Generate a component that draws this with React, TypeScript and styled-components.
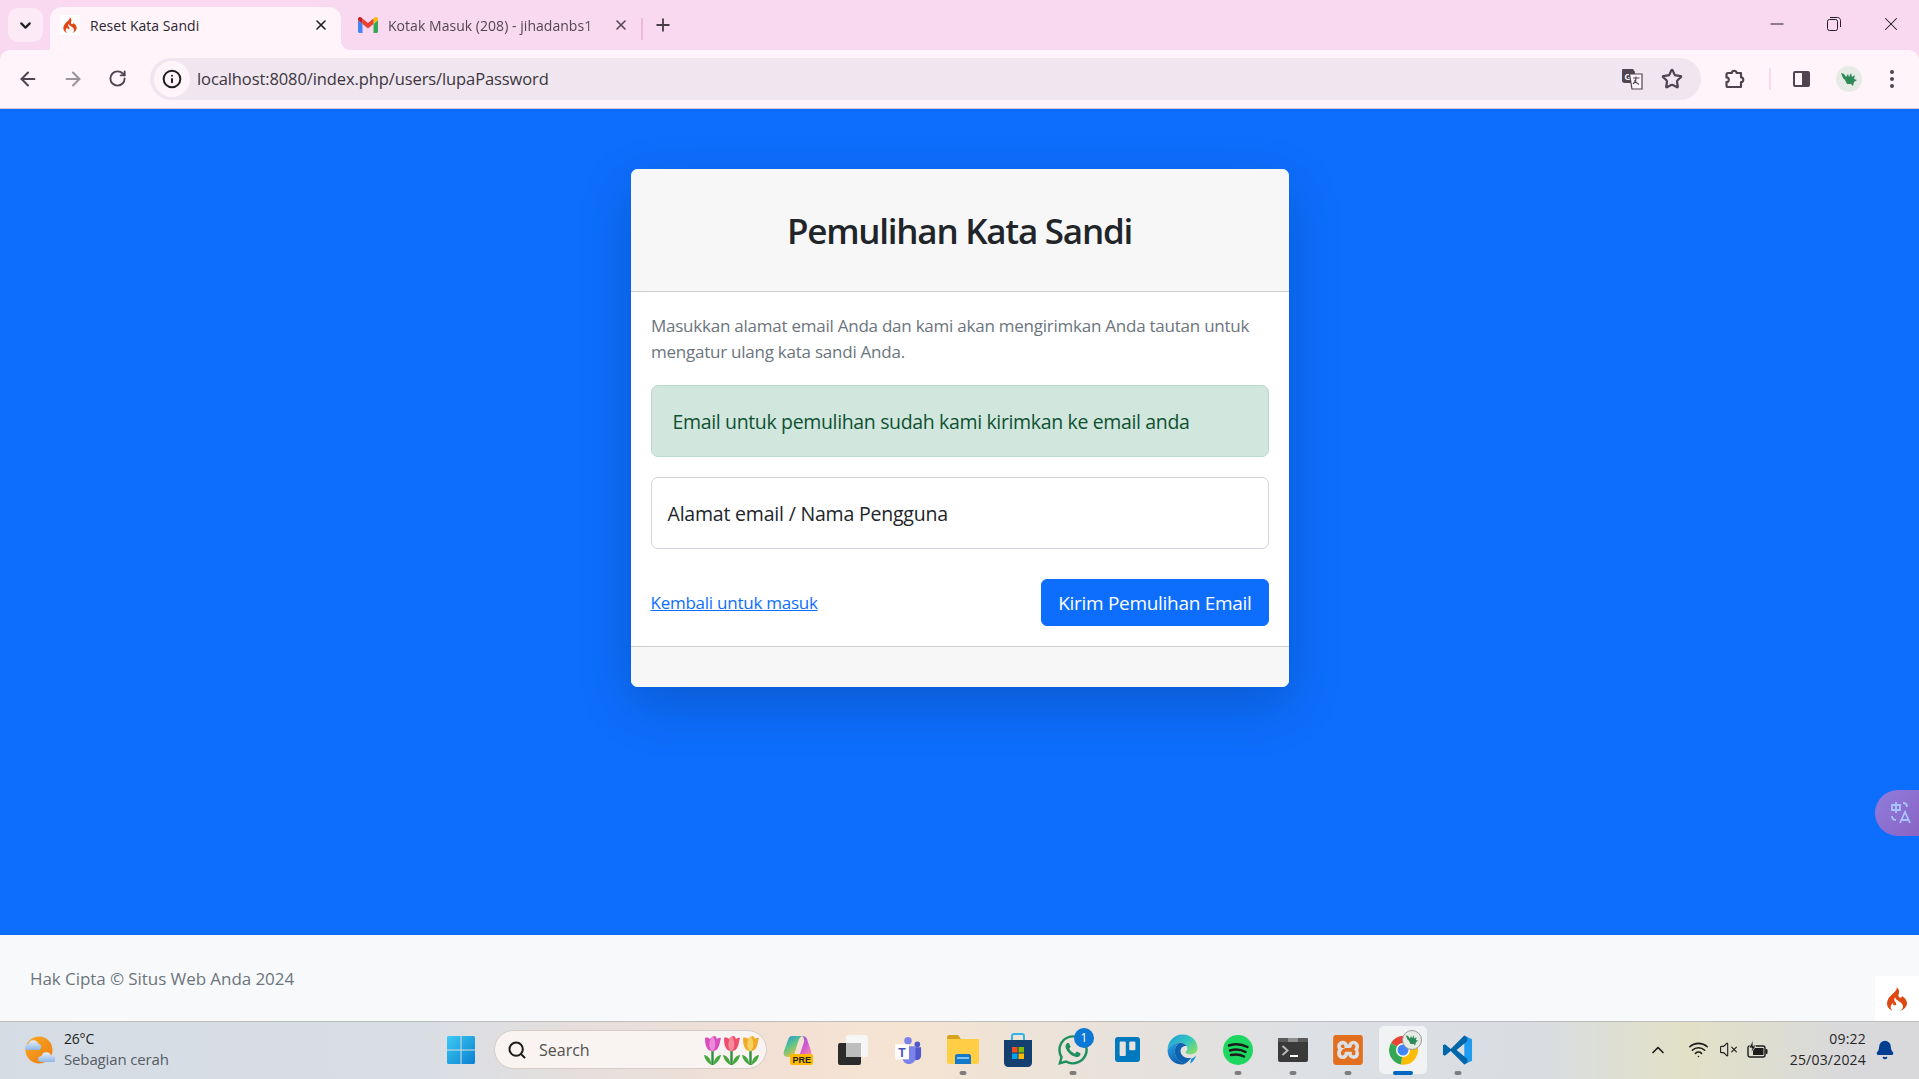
import React from "react";
import styled, { createGlobalStyle } from "styled-components";
import {
  ArrowLeft,
  ArrowRight,
  Bell,
  ChevronDown,
  ChevronUp,
  Info,
  Plus,
  RotateCw,
  Search,
  Star,
  VolumeX,
  Wifi,
  X,
} from "lucide-react";
import { FaWhatsapp } from "react-icons/fa";
import { SiCodeigniter, SiTrello, SiXampp } from "react-icons/si";

const UI_FONT = `"Open Sans", "Noto Sans", "Liberation Sans", sans-serif`;

const GlobalStyle = createGlobalStyle`
  html, body {
    margin: 0;
    padding: 0;
    height: 100%;
    overflow: hidden;
  }
  body {
    font-family: ${UI_FONT};
  }
  * {
    box-sizing: border-box;
  }
`;

const Page = styled.div`
  position: relative;
  display: flex;
  flex-direction: column;
  height: 1079px;
  overflow: hidden;
  background: #f8d9f0;
`;

/* tab strip */
const TabStrip = styled.div`
  display: flex;
  align-items: flex-end;
  height: 50px;
  flex: none;
  padding-left: 8px;
  color: #473f45;
`;

const TabSearch = styled.div`
  display: flex;
  align-items: center;
  justify-content: center;
  align-self: flex-start;
  width: 35px;
  height: 34px;
  margin-top: 8px;
  border-radius: 10px;
  background: #fdeaf7;
  color: #1f1f1f;
`;

const Tab = styled.div<{ $active?: boolean }>`
  position: relative;
  display: flex;
  align-items: center;
  width: ${(p) => (p.$active ? 291 : 300)}px;
  height: 43px;
  margin-left: ${(p) => (p.$active ? 7 : 0)}px;
  padding: 0 12px 7px ${(p) => (p.$active ? 10 : 17)}px;
  border-radius: 12px 12px 0 0;
  background: ${(p) => (p.$active ? "#fff4fa" : "transparent")};
  color: ${(p) => (p.$active ? "#2c2630" : "#524650")};
  &::after {
    content: ${(p) => (p.$active ? '""' : "none")};
    position: absolute;
    right: -10px;
    bottom: 0;
    width: 10px;
    height: 10px;
    background: radial-gradient(circle at 100% 0, transparent 10px, #fff4fa 10.5px);
  }
`;

const Favicon = styled.span<{ $boxed?: boolean }>`
  display: flex;
  align-items: center;
  justify-content: center;
  flex: none;
  width: 20px;
  height: 20px;
  background: ${(p) => (p.$boxed ? "#ffffff" : "transparent")};
  color: #dd4814;
`;

const TabTitle = styled.span<{ $fade?: boolean }>`
  flex: 1;
  margin-left: 10px;
  overflow: hidden;
  white-space: nowrap;
  font-size: 14px;
  letter-spacing: 0.04px;
  ${(p) =>
    p.$fade &&
    `-webkit-mask-image: linear-gradient(to right, #000 88%, transparent 100%);
     mask-image: linear-gradient(to right, #000 88%, transparent 100%);`}
`;

const TabDivider = styled.span`
  width: 2px;
  height: 22px;
  margin: 0 0 10px 0;
  background: #eeb7dc;
`;

const NewTab = styled.span`
  display: flex;
  align-items: center;
  justify-content: center;
  width: 40px;
  height: 34px;
  margin-bottom: 8px;
  color: #473f45;
`;

const WindowButtons = styled.div`
  display: flex;
  align-self: flex-start;
  margin-left: auto;
  height: 48px;
`;

const WindowButton = styled.span`
  display: flex;
  align-items: center;
  justify-content: center;
  width: 57px;
  color: #201c20;
`;

/* address bar */
const Toolbar = styled.div`
  display: flex;
  align-items: center;
  flex: none;
  height: 59px;
  padding: 0 0 1px 10px;
  border-radius: 10px 10px 0 0;
  background: #fff4fa;
  border-bottom: 1px solid #d8c4d8;
`;

const NavButton = styled.span<{ $muted?: boolean; $width?: number }>`
  display: flex;
  align-items: center;
  justify-content: center;
  flex: none;
  width: ${(p) => p.$width ?? 36}px;
  height: 36px;
  color: ${(p) => (p.$muted ? "#9c939b" : "#4f4450")};
`;

const Omnibox = styled.div`
  display: flex;
  align-items: center;
  flex: none;
  width: 1551px;
  height: 42px;
  margin-left: 15px;
  padding-left: 4px;
  border-radius: 21px;
  background: #efe6ef;
`;

const SiteInfo = styled.span`
  display: flex;
  align-items: center;
  justify-content: center;
  flex: none;
  width: 36px;
  height: 36px;
  border-radius: 50%;
  background: #fff4fa;
  color: #1f1f1f;
`;

const UrlText = styled.span`
  margin-left: 7px;
  font-size: 16.5px;
  letter-spacing: -0.1px;
  color: #3d3540;
`;

const OmniActions = styled.div`
  display: flex;
  align-items: center;
  gap: 4px;
  margin-left: auto;
  padding-right: 11px;
`;

const ToolDivider = styled.span`
  flex: none;
  width: 2px;
  height: 22px;
  margin-right: 13px;
  background: #f8d9f0;
`;

const Avatar = styled.span`
  display: flex;
  align-items: center;
  justify-content: center;
  flex: none;
  width: 26px;
  height: 26px;
  margin: 0 18px 0 16px;
  border-radius: 50%;
  background: #e6ebe6;
`;

/* page */
const Main = styled.main`
  flex: 1;
  display: flex;
  justify-content: center;
  align-items: flex-start;
  padding-top: 60px;
  background: #0d6efd;
`;

const Card = styled.section`
  width: 658px;
  border-radius: 7px;
  overflow: hidden;
  background: #ffffff;
  box-shadow: 0 18px 53px rgba(0, 0, 0, 0.18);
  color: #212529;
`;

const CardHeader = styled.header`
  display: flex;
  align-items: center;
  justify-content: center;
  height: 123px;
  background: #f7f7f7;
  border-bottom: 1px solid #cfcfcf;
`;

const Title = styled.h3`
  margin: 0;
  font-size: 35px;
  font-weight: 600;
  letter-spacing: -1.25px;
  color: #212529;
`;

const CardBody = styled.div`
  padding: 20px;
`;

const Lead = styled.p`
  margin: 0 0 21px;
  padding: 1px 0 0 0.5px;
  font-size: 17px;
  line-height: 26px;
  letter-spacing: -0.24px;
  color: #6c757d;
  white-space: pre-line;
  height: 52px;
`;

const Alert = styled.div`
  display: flex;
  align-items: center;
  height: 72px;
  margin-bottom: 20px;
  padding: 0 21px;
  border: 1px solid #badbcc;
  border-radius: 7px;
  background: #d1e7dd;
  font-size: 19.5px;
  letter-spacing: -0.35px;
  color: #0f5132;
`;

const EmailField = styled.div`
  display: flex;
  align-items: center;
  height: 72px;
  padding: 0 16px;
  border: 1px solid #ced4da;
  border-radius: 7px;
  background: #ffffff;
  font-size: 19.5px;
  letter-spacing: -0.2px;
  color: #212529;
`;

const FormActions = styled.div`
  display: flex;
  align-items: center;
  justify-content: space-between;
  margin-top: 30px;
`;

const BackLink = styled.a`
  font-size: 17px;
  letter-spacing: -0.25px;
  color: #0d6efd;
  text-decoration: underline;
`;

const SubmitButton = styled.button`
  height: 47px;
  padding: 0 16px;
  border: 1px solid #0d6efd;
  border-radius: 6px;
  background: #0d6efd;
  color: #ffffff;
  font-family: inherit;
  font-size: 19px;
  letter-spacing: -0.3px;
`;

const CardFooter = styled.footer`
  height: 41px;
  background: #f7f7f7;
  border-top: 1px solid #cfcfcf;
`;

const SiteFooter = styled.footer`
  display: flex;
  align-items: center;
  flex: none;
  height: 86px;
  padding-left: 30px;
  background: #f8f9fa;
  font-size: 17px;
  letter-spacing: -0.07px;
  color: #6c757d;
`;

/* overlays that belong to the page */
const TranslateBubble = styled.span`
  position: absolute;
  top: 790px;
  right: 0;
  display: flex;
  align-items: center;
  width: 44px;
  height: 46px;
  padding-left: 15px;
  border-radius: 23px 0 0 23px;
  background: linear-gradient(135deg, #8f7ddc, #8a63c4);
  color: #a9c4ff;
`;

const DebugFlame = styled.span`
  position: absolute;
  top: 976px;
  right: 0;
  display: flex;
  align-items: center;
  justify-content: center;
  width: 44px;
  height: 45px;
  background: #ffffff;
  color: #dd4814;
`;

/* taskbar */
const Taskbar = styled.div`
  display: flex;
  align-items: center;
  flex: none;
  height: 58px;
  padding-bottom: 2px;
  border-top: 1px solid #bdbdbd;
  background: linear-gradient(
    90deg,
    #d5dce4 0%,
    #d9dee4 22%,
    #f3e0d5 40%,
    #f5e4d2 47%,
    #dde0e4 68%,
    #d9dde2 80%,
    #e2e1c6 88%,
    #d9d9dc 96%
  );
`;

const Weather = styled.div`
  display: flex;
  align-items: center;
  flex: none;
  width: 441px;
  padding-left: 24px;
`;

const WeatherText = styled.div`
  margin: -1px 0 0 9px;
  font-size: 15px;
  line-height: 20px;
  letter-spacing: -0.15px;
  color: #555c64;
  strong {
    display: block;
    font-size: 14px;
    font-weight: 400;
    letter-spacing: -0.2px;
    color: #1c1c1c;
  }
`;

const StartButton = styled.span`
  display: flex;
  align-items: center;
  justify-content: center;
  flex: none;
  width: 40px;
  height: 40px;
`;

const SearchPill = styled.div`
  display: flex;
  align-items: center;
  flex: none;
  width: 273px;
  height: 39px;
  margin-left: 13px;
  padding-left: 12px;
  border: 1px solid #d5ccc8;
  border-radius: 20px;
  background: #f9f4f1;
  color: #1c1c1c;
`;

const SearchLabel = styled.span`
  margin-left: 12px;
  font-size: 16px;
  letter-spacing: 0;
  color: #50504f;
`;

const Tulips = styled.span`
  display: flex;
  margin-left: auto;
  padding-right: 6px;
`;

const AppRow = styled.div`
  display: flex;
  align-items: center;
  margin-left: 3px;
`;

const AppSlot = styled.span<{ $active?: boolean; $running?: boolean }>`
  position: relative;
  display: flex;
  align-items: center;
  justify-content: center;
  width: 55px;
  height: 48px;
  &::before {
    content: ${(p) => (p.$active ? '""' : "none")};
    position: absolute;
    top: 0;
    left: 3.5px;
    width: 48px;
    height: 48px;
    border-radius: 5px;
    background: rgba(255, 255, 255, 0.6);
  }
  &::after {
    content: ${(p) => (p.$running || p.$active ? '""' : "none")};
    position: absolute;
    bottom: -1px;
    left: 50%;
    width: ${(p) => (p.$active ? 20 : 7)}px;
    height: 4px;
    border-radius: 2px;
    transform: translateX(-50%);
    background: ${(p) => (p.$active ? "#0067c0" : "#7c7c7c")};
  }
  svg {
    position: relative;
  }
`;

const CountBadge = styled.span`
  position: absolute;
  top: 2px;
  right: 6px;
  display: flex;
  align-items: center;
  justify-content: center;
  width: 20px;
  height: 20px;
  border-radius: 50%;
  background: #0a78d4;
  color: #ffffff;
  font-size: 12px;
`;

const ProfileBadge = styled.span`
  position: absolute;
  top: 4px;
  right: 8px;
  display: flex;
  align-items: center;
  justify-content: center;
  width: 20px;
  height: 20px;
  border-radius: 50%;
  border: 1px solid #9a9a9a;
  background: #e6ebe6;
`;

const Tray = styled.div`
  display: flex;
  align-items: center;
  margin-left: auto;
  color: #1c1c1c;
`;

const TrayIcon = styled.span<{ $gap?: number }>`
  display: flex;
  align-items: center;
  justify-content: center;
  width: 30px;
  margin-right: ${(p) => p.$gap ?? 0}px;
`;

const Clock = styled.div`
  width: 93px;
  margin-top: -1px;
  font-size: 14px;
  line-height: 21px;
  letter-spacing: 0.2px;
  text-align: right;
  color: #262626;
`;

const BellSlot = styled.span`
  display: flex;
  justify-content: center;
  width: 38px;
  margin-right: 15px;
  color: #003e92;
`;

/* drawings */
const GmailIcon = () => (
  <svg width="20" height="16" viewBox="0 0 20 16">
    <path d="M0 3v11.500C0 15.300.7 16 1.500 16H4.500V7L0 3z" fill="#4285f4" />
    <path d="M15.500 16h3c.8 0 1.500-.7 1.500-1.500V3l-4.500 4V16z" fill="#34a853" />
    <path d="M15.500 1.500V7L20 3V2c0-1.700-2-2.700-3.300-1.500l-1.200 1z" fill="#fbbc04" />
    <path d="M4.500 7V1.500L10 6l5.500-4.500V7L10 11.500 4.500 7z" fill="#ea4335" />
    <path d="M0 2v1l4.500 4V1.500l-1.200-1C2 -.7 0 .3 0 2z" fill="#c5221f" />
  </svg>
);

const TranslateIcon = () => (
  <svg width="22" height="22" viewBox="0 0 22 22">
    <path d="M2 1h10l2 3v11H3.500C2.500 15 1 14 1 13V2.500C1 1.700 1.300 1 2 1z" fill="#4f4450" />
    <text x="3.500" y="11.500" fontSize="9" fontWeight="700" fontFamily="Liberation Sans" fill="#fff">
      G
    </text>
    <path d="M8.500 6h12.500v15H11z" fill="#fff4fa" stroke="#4f4450" strokeWidth="1.200" />
    <path d="M12 10h6.500M15 8.500V10c0 3-1.500 5-3 6M13.500 12c1 2 2.500 3.500 4.500 4.500" fill="none" stroke="#4f4450" strokeWidth="1.100" />
  </svg>
);

const PuzzleIcon = () => (
  <svg width="24" height="24" viewBox="0 0 24 24">
    <path
      d="M5 6h4c-.6-3 5-3 4.500 0H18v4.500c3-.6 3 5 0 4.500V20H5c-1 0-1.500-.5-1.500-1.500V15c3 .5 3-5 0-4.500V7.500C3.500 6.500 4 6 5 6z"
      fill="none"
      stroke="#4f4450"
      strokeWidth="2.200"
      strokeLinejoin="round"
    />
  </svg>
);

const SidePanelIcon = () => (
  <svg width="20" height="20" viewBox="0 0 20 20">
    <rect x="1" y="2" width="17" height="16" rx="2" fill="#4f4450" />
    <rect x="3" y="4" width="7" height="12" fill="#fff4fa" />
  </svg>
);

const DragonIcon = ({ size = 18 }: { size?: number }) => (
  <svg width={size} height={size} viewBox="0 0 18 18">
    <path d="M1 3l3 1 2 3 2-3 1 3 2-4 1 4 3-2-1 4 3 1-3 2-1 4-2-2H7L5 10 3 8z" fill="#2f8a57" />
  </svg>
);

const KebabIcon = () => (
  <svg width="6" height="20" viewBox="0 0 6 20">
    <circle cx="3" cy="3" r="2" fill="#4f4450" />
    <circle cx="3" cy="10" r="2" fill="#4f4450" />
    <circle cx="3" cy="17" r="2" fill="#4f4450" />
  </svg>
);

const MinimizeIcon = () => (
  <svg width="14" height="14" viewBox="0 0 14 14">
    <path d="M0.500 7h13" stroke="currentColor" strokeWidth="1" />
  </svg>
);

const RestoreIcon = () => (
  <svg width="14" height="14" viewBox="0 0 14 14">
    <rect x="0.500" y="2.500" width="10" height="11" rx="2" fill="none" stroke="currentColor" />
    <path d="M3 .500h7.500c1.700 0 3 1.300 3 3V10" fill="none" stroke="currentColor" />
  </svg>
);

const WeatherIcon = () => (
  <svg width="31" height="30" viewBox="0 0 31 30">
    <defs>
      <linearGradient id="sun" x1="0" y1="0" x2="1" y2="1">
        <stop offset="0" stopColor="#f9a825" />
        <stop offset="1" stopColor="#ee7d11" />
      </linearGradient>
      <linearGradient id="cloud" x1="0" y1="0" x2="0" y2="1">
        <stop offset="0" stopColor="#e4effb" />
        <stop offset="1" stopColor="#8fb6e6" />
      </linearGradient>
    </defs>
    <circle cx="15" cy="15" r="13.500" fill="url(#sun)" />
    <path d="M1 12.500a3.500 3.500 0 0 1 3.500-3.500 5 5 0 0 1 9.500-.5 3.500 3.500 0 0 1 1.500 6.500H4a3 3 0 0 1-3-2.500z" fill="url(#cloud)" />
    <path d="M14 24.500a3.500 3.500 0 0 1 3.500-3.500 5 5 0 0 1 9.500-.5 3.500 3.500 0 0 1 3 6.500H17a3 3 0 0 1-3-2.500z" fill="url(#cloud)" />
  </svg>
);

const WindowsLogo = () => (
  <svg width="30" height="30" viewBox="0 0 30 30">
    <defs>
      <linearGradient id="win" x1="0" y1="0" x2="1" y2="1">
        <stop offset="0" stopColor="#3ccbf4" />
        <stop offset="1" stopColor="#0a7fd0" />
      </linearGradient>
    </defs>
    <path
      d="M1 2.500C1 1.700 1.700 1 2.500 1h12v13.500H1zM15.500 1h12c.8 0 1.500.7 1.500 1.500v12H15.500zM1 15.500h13.500V29h-12C1.700 29 1 28.300 1 27.500zM15.500 15.500H29v12c0 .8-.7 1.500-1.500 1.500h-12z"
      fill="url(#win)"
    />
  </svg>
);

const Tulip = ({ petal, tip }: { petal: string; tip: string }) => (
  <svg width="19" height="30" viewBox="0 0 19 30">
    <path d="M9.500 15v15" stroke="#2f8f3a" strokeWidth="2.400" />
    <path d="M8.500 30C5 28 2 25 1 20c4 .5 7 4 7.500 10zM10.500 30c3.500-2 6.500-5 7.500-10-4 .5-7 4-7.500 10z" fill="#46a83f" />
    <path d="M2 3c2-1 4 0 5 1 1-2 4-3 5-3 1 .5 1.500 2 2 3 1-1 2.500-1.500 4-1-1 3-1 5-2 8-1 3-3 5-6.500 5S4 14 3 11C2 8 2 5 2 3z" fill={petal} />
    <path d="M9.500 1.500c2 2 3.500 6 2.500 10-.5 2.500-1.500 4-2.500 5-1.500-1-2.500-2.500-3-5-.6-4 1-8 3-10z" fill={tip} />
  </svg>
);

const CopilotIcon = () => (
  <svg width="30" height="30" viewBox="0 0 30 30">
    <defs>
      <linearGradient id="cop" x1="0" y1="0" x2="0.6" y2="1">
        <stop offset="0" stopColor="#1c8fe6" />
        <stop offset="0.5" stopColor="#5cc58a" />
        <stop offset="1" stopColor="#f4c23c" />
      </linearGradient>
      <linearGradient id="cop2" x1="0" y1="0" x2="0.8" y2="1">
        <stop offset="0" stopColor="#7a52e0" />
        <stop offset="0.6" stopColor="#d45bd0" />
        <stop offset="1" stopColor="#f58ab0" />
      </linearGradient>
    </defs>
    <path d="M9 1h10c-2 1-3 3-4 6l-3 10c-1 3-2 5-5 5H5c-4 0-5-3-4-6l4-11C6 2 7 1 9 1z" fill="url(#cop)" />
    <path d="M19 1c3 0 4 1 5 3l4 12c1 3 0 6-3 6H14c2-1 3-3 4-6l3-9c.5-2 0-5-2-6z" fill="url(#cop2)" />
    <rect x="7" y="19" width="23" height="11" rx="2" fill="#ffb900" />
    <text x="9.500" y="28" fontSize="9" fontWeight="700" fontFamily="Liberation Sans" fill="#222">
      PRE
    </text>
  </svg>
);

const CopyStackIcon = () => (
  <svg width="30" height="30" viewBox="0 0 30 30">
    <rect x="8" y="0" width="22" height="22" rx="2" fill="#f6f6f6" />
    <rect x="0" y="8" width="23" height="22" rx="2" fill="#2b2b2b" />
    <rect x="8" y="8" width="15" height="14" fill="#bdbdbd" />
  </svg>
);

const TeamsIcon = () => (
  <svg width="28" height="28" viewBox="0 0 28 30">
    <circle cx="14" cy="5" r="4" fill="#7b83eb" />
    <circle cx="24" cy="9" r="3" fill="#5059c9" />
    <path d="M20 12h8v9c0 3-2 5-5 5-1 0-2 0-3-1z" fill="#5059c9" />
    <path d="M8 11h14v13c0 3-3 6-7 6-4 0-7-3-7-7z" fill="#7b83eb" />
    <rect x="0" y="9" width="15" height="16" fill="#ffffff" />
    <text x="3.500" y="22" fontSize="13" fontWeight="700" fontFamily="Liberation Sans" fill="#4b53bc">
      T
    </text>
  </svg>
);

const FolderIcon = () => (
  <svg width="32" height="29" viewBox="0 0 32 29">
    <path d="M0 2c0-1 1-2 2-2h9l3 4h-14z" fill="#d8a420" />
    <path d="M0 4h32v23c0 1-1 2-2 2H2c-1 0-2-1-2-2z" fill="#ffce44" />
    <path d="M8 29v-8c0-1 1-2 2-2h12c1 0 2 1 2 2v8z" fill="#1479c8" />
    <rect x="10" y="22" width="12" height="2" fill="#7ec4f2" />
  </svg>
);

const StoreIcon = () => (
  <svg width="30" height="34" viewBox="0 0 30 34">
    <path d="M9 7V3c0-1 1-2 2-2h8c1 0 2 1 2 2v4" fill="none" stroke="#32b4e8" strokeWidth="2" />
    <path d="M1 7h28v23c0 2-2 4-4 4H5c-2 0-4-2-4-4z" fill="#143f6f" />
    <rect x="9" y="14" width="5.500" height="5.500" fill="#f25022" />
    <rect x="15.500" y="14" width="5.500" height="5.500" fill="#7fba00" />
    <rect x="9" y="20.500" width="5.500" height="5.500" fill="#00a4ef" />
    <rect x="15.500" y="20.500" width="5.500" height="5.500" fill="#ffb900" />
  </svg>
);

const EdgeIcon = () => (
  <svg width="31" height="31" viewBox="0 0 32 32">
    <defs>
      <linearGradient id="edgeTop" x1="0" y1="0" x2="1" y2="0.7">
        <stop offset="0" stopColor="#1f9bd8" />
        <stop offset="0.6" stopColor="#33c6c0" />
        <stop offset="1" stopColor="#7fdc6a" />
      </linearGradient>
      <linearGradient id="edgeLow" x1="0" y1="0" x2="0.6" y2="1">
        <stop offset="0" stopColor="#2aa4ea" />
        <stop offset="1" stopColor="#0b5aa8" />
      </linearGradient>
    </defs>
    <path d="M16 .5c9 0 15.500 6.500 15.500 14 0 4-3 6.500-7 6.500-3 0-5-1-5.500-2.500 1.500-1 2-2 2-3.500C21 11 17 8.500 13 9 7 9.500 2 13 .6 17 .5 8 7 .5 16 .5z" fill="url(#edgeTop)" />
    <path d="M.6 17C2 12.500 7 9.500 13 9c-3 1.500-5 5-5 9 0 6 4 11 11 12.500-1 .6-2 1-3 1C7 31.500.6 25 .6 17z" fill="url(#edgeLow)" />
    <path d="M8 18c0-4 2-7.500 5-9 3-.2 6 1.200 7.300 3.500-4.300-.5-6.300 2.500-6.300 5 0 5 5.500 8.500 11 7-2 3-5 5.500-6 6-7-1.500-11-6.500-11-12.500z" fill="#0f62ad" />
    <path d="M25 25.500c2.500-.8 4-2 5-3.500-1 4-3 6.500-6 8.500z" fill="#1a8fd8" />
  </svg>
);

const SpotifyIcon = () => (
  <svg width="30" height="30" viewBox="0 0 30 30">
    <circle cx="15" cy="15" r="15" fill="#1ed760" />
    <path d="M6 10.500c6-2 13-1.500 18.500 1.500M7 15.500c5.500-1.500 11-1 15.500 1.500M8 20c4.500-1 9-.7 13 1.500" fill="none" stroke="#1b1b1b" strokeWidth="2.500" strokeLinecap="round" />
  </svg>
);

const TerminalIcon = () => (
  <svg width="30" height="24" viewBox="0 0 30 24">
    <rect width="30" height="24" rx="2" fill="#3a3a3a" />
    <rect x="0" y="0" width="30" height="4" rx="1" fill="#5a5a5a" />
    <rect x="10" y="0" width="10" height="4" fill="#8e8e8e" />
    <path d="M4.500 8l5 4.500-5 4.500" fill="none" stroke="#b8b8b8" strokeWidth="2" />
    <path d="M12 18h8" stroke="#ffffff" strokeWidth="2" />
  </svg>
);

const ChromeIcon = () => (
  <svg width="32" height="32" viewBox="0 0 32 32">
    <path d="M16 16L4 9A14.500 14.500 0 0 1 29 9z" fill="#ea4335" />
    <path d="M16 16L29 9A14.500 14.500 0 0 1 14 30.500z" fill="#fbbc04" />
    <path d="M16 16L14 30.500A14.500 14.500 0 0 1 4 9z" fill="#34a853" />
    <circle cx="16" cy="16" r="7" fill="#ffffff" />
    <circle cx="16" cy="16" r="5.500" fill="#4285f4" />
  </svg>
);

const VsCodeIcon = () => (
  <svg width="31" height="32" viewBox="0 0 32 32">
    <path d="M23 1L31 5v22l-8 4z" fill="#1f9cf0" />
    <path d="M23 1L9 15 3 10 1 11v10l2 1 6-5 14 14 3-2V25L15 16 26 7V3z" fill="#0065a9" />
  </svg>
);

const TranslateGlyph = () => (
  <svg width="22" height="24" viewBox="0 0 22 24" fill="none" stroke="currentColor" strokeWidth="1.800">
    <path d="M2 4h8v5H2zM6 1v11M13 2c3 0 4 1 4 4M2 15c0 3 1 4 4 4" />
    <path d="M10 22l5-11 5 11M12 19h6" />
  </svg>
);

const BatteryIcon = () => (
  <svg width="22" height="20" viewBox="0 0 22 20">
    <rect x="1" y="6" width="17" height="11" rx="2" fill="none" stroke="#1c1c1c" strokeWidth="1.400" />
    <rect x="6" y="8" width="10.500" height="7" fill="#1c1c1c" />
    <rect x="18.500" y="9" width="2" height="5" rx="1" fill="#1c1c1c" />
    <path d="M6 0L2 8h3l-1 5 5-7H6z" fill="#1c1c1c" stroke="#e0e0d0" strokeWidth="0.800" />
  </svg>
);

const apps: {
  key: string;
  node: React.ReactNode;
  running?: boolean;
  active?: boolean;
  extra?: React.ReactNode;
}[] = [
  { key: "copilot", node: <CopilotIcon /> },
  { key: "copy", node: <CopyStackIcon /> },
  { key: "teams", node: <TeamsIcon /> },
  { key: "files", node: <FolderIcon />, running: true },
  { key: "store", node: <StoreIcon /> },
  {
    key: "whatsapp",
    node: <FaWhatsapp size={34} color="#1f8f5f" />,
    running: true,
    extra: <CountBadge>1</CountBadge>,
  },
  { key: "trello", node: <SiTrello size={25} color="#0079bf" /> },
  { key: "edge", node: <EdgeIcon /> },
  { key: "spotify", node: <SpotifyIcon />, running: true },
  { key: "terminal", node: <TerminalIcon />, running: true },
  { key: "xampp", node: <SiXampp size={30} color="#e2701f" />, running: true },
  {
    key: "chrome",
    node: <ChromeIcon />,
    active: true,
    extra: (
      <ProfileBadge>
        <DragonIcon size={14} />
      </ProfileBadge>
    ),
  },
  { key: "vscode", node: <VsCodeIcon />, running: true },
];

export default function App() {
  return (
    <Page>
      <GlobalStyle />
      <TabStrip>
        <TabSearch>
          <ChevronDown size={17} strokeWidth={3} />
        </TabSearch>
        <Tab $active>
          <Favicon $boxed>
            <SiCodeigniter size={16} />
          </Favicon>
          <TabTitle>Reset Kata Sandi</TabTitle>
          <X size={16} strokeWidth={2.4} color="#1f1f1f" />
        </Tab>
        <Tab>
          <Favicon>
            <GmailIcon />
          </Favicon>
          <TabTitle $fade>Kotak Masuk (208) - jihadanbs1</TabTitle>
          <X size={16} strokeWidth={2.4} />
        </Tab>
        <TabDivider />
        <NewTab>
          <Plus size={20} strokeWidth={2.2} />
        </NewTab>
        <WindowButtons>
          <WindowButton>
            <MinimizeIcon />
          </WindowButton>
          <WindowButton>
            <RestoreIcon />
          </WindowButton>
          <WindowButton>
            <X size={22} strokeWidth={1.1} />
          </WindowButton>
        </WindowButtons>
      </TabStrip>

      <Toolbar>
        <NavButton>
          <ArrowLeft size={22} strokeWidth={2.2} />
        </NavButton>
        <NavButton $muted $width={53}>
          <ArrowRight size={22} strokeWidth={2.2} />
        </NavButton>
        <NavButton $width={36}>
          <RotateCw size={19} strokeWidth={2.4} />
        </NavButton>
        <Omnibox>
          <SiteInfo>
            <Info size={20} strokeWidth={2.4} />
          </SiteInfo>
          <UrlText>localhost:8080/index.php/users/lupaPassword</UrlText>
          <OmniActions>
            <NavButton>
              <TranslateIcon />
            </NavButton>
            <NavButton>
              <Star size={22} strokeWidth={2.4} />
            </NavButton>
          </OmniActions>
        </Omnibox>
        <NavButton $width={68}>
          <PuzzleIcon />
        </NavButton>
        <ToolDivider />
        <NavButton $width={36}>
          <SidePanelIcon />
        </NavButton>
        <Avatar>
          <DragonIcon />
        </Avatar>
        <NavButton $width={24}>
          <KebabIcon />
        </NavButton>
      </Toolbar>

      <Main>
        <Card>
          <CardHeader>
            <Title>Pemulihan Kata Sandi</Title>
          </CardHeader>
          <CardBody>
            <Lead>
              {"Masukkan alamat email Anda dan kami akan mengirimkan Anda tautan untuk\nmengatur ulang kata sandi Anda."}
            </Lead>
            <Alert>Email untuk pemulihan sudah kami kirimkan ke email anda</Alert>
            <EmailField>Alamat email / Nama Pengguna</EmailField>
            <FormActions>
              <BackLink href="#">Kembali untuk masuk</BackLink>
              <SubmitButton type="button">Kirim Pemulihan Email</SubmitButton>
            </FormActions>
          </CardBody>
          <CardFooter />
        </Card>
      </Main>

      <SiteFooter>Hak Cipta © Situs Web Anda 2024</SiteFooter>

      <Taskbar>
        <Weather>
          <WeatherIcon />
          <WeatherText>
            <strong>26°C</strong>
            Sebagian cerah
          </WeatherText>
        </Weather>
        <StartButton>
          <WindowsLogo />
        </StartButton>
        <SearchPill>
          <Search size={20} strokeWidth={2.4} />
          <SearchLabel>Search</SearchLabel>
          <Tulips>
            <Tulip petal="#d94fc0" tip="#ee8ad8" />
            <Tulip petal="#ee4f6e" tip="#f58c9c" />
            <Tulip petal="#f0aa2c" tip="#f8d25e" />
          </Tulips>
        </SearchPill>
        <AppRow>
          {apps.map((app) => (
            <AppSlot key={app.key} $running={app.running} $active={app.active}>
              {app.node}
              {app.extra}
            </AppSlot>
          ))}
        </AppRow>
        <Tray>
          <TrayIcon $gap={10}>
            <ChevronUp size={20} strokeWidth={2} />
          </TrayIcon>
          <TrayIcon>
            <Wifi size={21} strokeWidth={1.8} />
          </TrayIcon>
          <TrayIcon>
            <VolumeX size={19} strokeWidth={1.4} />
          </TrayIcon>
          <TrayIcon>
            <BatteryIcon />
          </TrayIcon>
          <Clock>
            09:22
            <br />
            25/03/2024
          </Clock>
          <BellSlot>
            <Bell size={20} fill="currentColor" />
          </BellSlot>
        </Tray>
      </Taskbar>

      <TranslateBubble>
        <TranslateGlyph />
      </TranslateBubble>
      <DebugFlame>
        <SiCodeigniter size={24} />
      </DebugFlame>
    </Page>
  );
}
